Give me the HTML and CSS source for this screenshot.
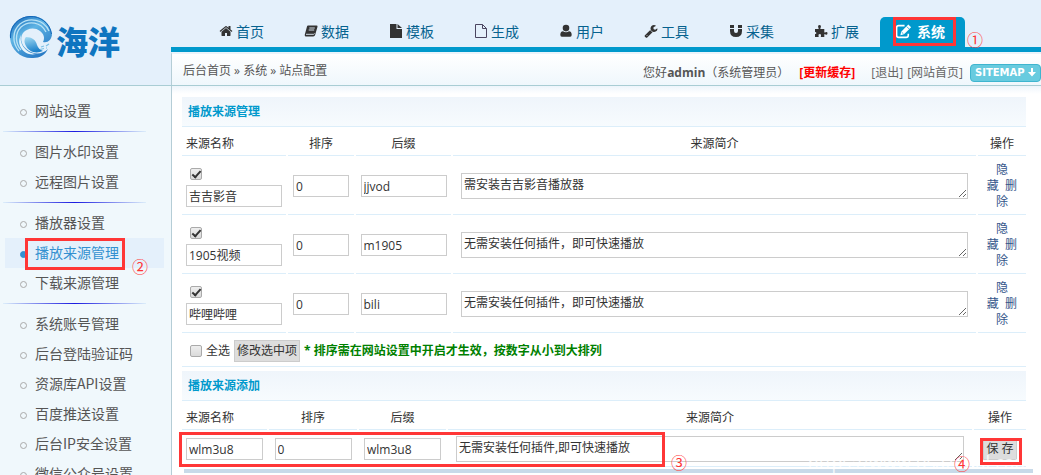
FILE: index.html
```html
<!DOCTYPE html>
<html lang="zh-CN">
<head>
<meta charset="utf-8">
<title>海洋 - 播放来源管理</title>
<link rel="stylesheet" href="styles.css">
</head>
<body>
<header class="top">
  <div class="logo">
    <svg class="logo-mark" viewBox="0 0 44 44" aria-hidden="true">
      <defs>
        <linearGradient id="ring" x1="0" y1="0" x2="0.6" y2="1">
          <stop offset="0" stop-color="#0b5fb4"/><stop offset="0.45" stop-color="#5fb4e4"/><stop offset="1" stop-color="#2a7cc6"/>
        </linearGradient>
        <linearGradient id="drop" x1="0" y1="0" x2="0.3" y2="1">
          <stop offset="0" stop-color="#a5dcf3"/><stop offset="1" stop-color="#1d82cb"/>
        </linearGradient>
      </defs>
      <path fill="url(#ring)" d="M43 20C42 8 32 0 21 1 9 2 0 11 1 23c1 12 11 21 23 20 7 0 12-3 15-9-5 5-13 6-19 2-7-4-10-12-6-18 4-5 12-6 17-2 4 3 5 7 3 11 5 1 8-2 9-7z"/>
      <path fill="none" stroke="#b9e2f5" stroke-width="1.300" d="M40 16C35 4 20 2 11 9 3 16 3 28 10 36M37 17C32 7 20 5 12 12 6 18 6 28 12 35"/>
      <path fill="none" stroke="#1466b8" d="M42.500 19C41 8 31 1 21 1.500 9 2 1 11 1.500 23"/>
      <path fill="#e9f5fc" d="M12 20c-2 9 5 18 15 19-11 3-21-9-15-19z"/>
      <path fill="url(#drop)" d="M17 22c6 0 10 3 11 8 1 3 3 5 6 6-7 3-14 1-17-5-2-3-2-7 0-9z"/>
      <path fill="none" stroke="#7cc0e6" stroke-width="1.200" d="M32 32l3-1M37 31l3-2M31 34.500l4-1M37 33h1"/>
    </svg>
    <span class="logo-text">海洋</span>
  </div>
  <div class="top-main">
    <nav class="nav">
      <a href="#"><svg class="icon" viewBox="0 0 1792 1792"><path d="M1472 992v480q0 26-19 45t-45 19h-384v-384h-256v384h-384q-26 0-45-19t-19-45v-480q0-1 .5-3t.5-3l575-474 575 474q1 2 1 6zm223-69l-62 74q-8 9-21 11h-3q-13 0-21-7l-692-577-692 577q-12 8-24 7-13-2-21-11l-62-74q-8-10-7-23.500t11-21.500l719-599q32-26 76-26t76 26l244 204v-195q0-14 9-23t23-9h192q14 0 23 9t9 23v408l219 182q10 8 11 21.500t-7 23.500z"/></svg>首页</a>
      <a href="#"><svg class="icon" viewBox="0 0 14 14"><path d="M4 1.500h8.500q1.300 0 1 1.300l-2.300 8q-.4 1.700-2 1.700H2Q.7 12.500.7 11L3 2.500q.2-1 1-1z"/><path fill="none" stroke="#e4f0fa" stroke-width=".9" d="M5.300 4h5.500M4.700 6h5.500M2 10.300h7.500q.8 0 1-.8"/></svg>数据</a>
      <a href="#"><svg class="icon" viewBox="0 0 14 14"><path d="M1 0h6.500v5H13v9H1zM8.500 0L13 4H8.500z"/></svg>模板</a>
      <a href="#"><svg class="icon" viewBox="0 0 14 14"><path fill="none" stroke="#4a4560" d="M1.500.5h7l4 4v9h-11zM8.500.5v4h4"/></svg>生成</a>
      <a href="#"><svg class="icon" viewBox="0 0 14 14"><path d="M7 .8a3.200 3.200 0 0 1 0 6.600A3.200 3.200 0 0 1 7 .8zM4 7.200q3 2 6 0 2.700.4 2.700 3.600 0 2-1.500 2H2.800q-1.500 0-1.500-2Q1.300 7.600 4 7.200z"/></svg>用户</a>
      <a href="#"><svg class="icon" viewBox="0 0 1792 1792"><path d="M448 1472q0-26-19-45t-45-19-45 19-19 45 19 45 45 19 45-19 19-45zm644-420l-682 682q-37 37-90 37-52 0-91-37l-106-108q-38-36-38-90 0-53 38-91l681-681q39 98 114.500 173.500t173.500 114.500zm634-435q0 39-23 106-47 134-164.500 217.500t-258.500 83.500q-185 0-316.500-131.500t-131.500-316.500 131.500-316.500 316.500-131.500q58 0 121.500 16.500t107.500 46.500q16 11 16 28t-16 28l-293 169v224l193 107q5-3 79-48.500t135.500-81 70.500-35.500q15 0 23.500 10t8.500 25z"/></svg>工具</a>
      <a href="#"><svg class="icon" viewBox="0 0 14 14"><path d="M1 1h4v3H1zM9 1h4v3H9zM1 5h4v2q0 2 2 2t2-2V5h4v2q0 6-6 6T1 7z"/></svg>采集</a>
      <a href="#"><svg class="icon" viewBox="0 0 14 14"><path d="M1 5h3.500q.5-.5-.2-1.500Q3.500 1 5.500 1t1.200 2.500Q6 4.500 6.500 5h3.800v3.200q.5.500 1.200 0 2-.8 2 1.100t-2 1.100q-.7-.6-1.200 0V13H7q-.5-.4 0-1.200.4-1.700-1.200-1.800-1.700.1-1.300 1.800.4.800 0 1.200H1v-3q1.200.2 1.400-1Q2.200 7.900 1 8z"/></svg>扩展</a>
      <a href="#" class="active"><svg class="icon icon-edit" viewBox="0 0 16 14"><path fill="none" stroke="#fff" stroke-width="1.500" d="M9 1.500H3.500q-2 0-2 2v7q0 2 2 2h7q2 0 2-2V9"/><path fill="#fff" d="M12.500.5l2.700 2.600-6.700 6.600-3.400.8.700-3.300z"/><path stroke="#0099cc" stroke-width=".7" d="M11 2.300l2.500 2.500M6.200 7.500l1.800 1.800"/></svg>系统</a>
    </nav>
    <div class="crumb-bar">
      <div class="crumbs">后台首页 » 系统 » 站点配置</div>
      <div class="user">
        <span class="hello">您好<b>admin</b>（系统管理员）</span>
        <a href="#" class="refresh">[更新缓存]</a>
        <a href="#">[退出]</a>
        <a href="#">[网站首页]</a>
        <button type="button" class="sitemap">SITEMAP<svg viewBox="0 0 8 9" aria-hidden="true"><path d="M3 0h2v4h3L4 8.500 0 4h3z"/></svg></button>
      </div>
    </div>
  </div>
</header>
<div class="page">
  <aside class="side">
    <ul>
      <li><a href="#">网站设置</a></li>
    </ul>
    <ul>
      <li><a href="#">图片水印设置</a></li>
      <li><a href="#">远程图片设置</a></li>
    </ul>
    <ul>
      <li><a href="#">播放器设置</a></li>
      <li class="current"><a href="#">播放来源管理</a></li>
      <li><a href="#">下载来源管理</a></li>
    </ul>
    <ul>
      <li><a href="#">系统账号管理</a></li>
      <li><a href="#">后台登陆验证码</a></li>
      <li><a href="#">资源库API设置</a></li>
      <li><a href="#">百度推送设置</a></li>
      <li><a href="#">后台IP安全设置</a></li>
      <li><a href="#">微信公众号设置</a></li>
    </ul>
  </aside>
  <main class="main">
    <form class="panel">
      <table class="grid">
        <colgroup><col class="c-name"><col class="c-order"><col class="c-suffix"><col><col class="c-act"></colgroup>
        <tr class="title"><th colspan="5">播放来源管理</th></tr>
        <tr class="heads"><th class="left">来源名称</th><th>排序</th><th>后缀</th><th>来源简介</th><th>操作</th></tr>
        <tr class="item">
          <td class="left"><input type="checkbox" checked aria-label="选择吉吉影音"><input type="text" class="w-name" value="吉吉影音" aria-label="来源名称"></td>
          <td><input type="text" class="w-order" value="0" aria-label="排序"></td>
          <td><input type="text" class="w-suffix" value="jjvod" aria-label="后缀"></td>
          <td><textarea aria-label="来源简介">需安装吉吉影音播放器</textarea></td>
          <td class="acts"><a href="#">隐<br>藏</a>&nbsp; <a href="#">删<br>除</a></td>
        </tr>
        <tr class="item">
          <td class="left"><input type="checkbox" checked aria-label="选择1905视频"><input type="text" class="w-name" value="1905视频" aria-label="来源名称"></td>
          <td><input type="text" class="w-order" value="0" aria-label="排序"></td>
          <td><input type="text" class="w-suffix" value="m1905" aria-label="后缀"></td>
          <td><textarea aria-label="来源简介">无需安装任何插件，即可快速播放</textarea></td>
          <td class="acts"><a href="#">隐<br>藏</a>&nbsp; <a href="#">删<br>除</a></td>
        </tr>
        <tr class="item">
          <td class="left"><input type="checkbox" checked aria-label="选择哔哩哔哩"><input type="text" class="w-name" value="哔哩哔哩" aria-label="来源名称"></td>
          <td><input type="text" class="w-order" value="0" aria-label="排序"></td>
          <td><input type="text" class="w-suffix" value="bili" aria-label="后缀"></td>
          <td><textarea aria-label="来源简介">无需安装任何插件，即可快速播放</textarea></td>
          <td class="acts"><a href="#">隐<br>藏</a>&nbsp; <a href="#">删<br>除</a></td>
        </tr>
        <tr class="batch">
          <td colspan="5"><div class="batch-row"><label><input type="checkbox">全选</label><button type="button" class="btn">修改选中项</button><strong>* 排序需在网站设置中开启才生效，按数字从小到大排列</strong></div></td>
        </tr>
      </table>
    </form>
    <form class="panel">
      <table class="grid">
        <colgroup><col class="a-name"><col class="a-order"><col class="a-suffix"><col><col class="a-act"></colgroup>
        <tr class="title"><th colspan="5">播放来源添加</th></tr>
        <tr class="heads"><th class="left">来源名称</th><th>排序</th><th>后缀</th><th>来源简介</th><th>操作</th></tr>
        <tr class="add">
          <td class="left"><input type="text" class="w-add" value="wlm3u8" aria-label="来源名称"></td>
          <td><input type="text" class="w-add" value="0" aria-label="排序"></td>
          <td><input type="text" class="w-add" value="wlm3u8" aria-label="后缀"></td>
          <td><textarea aria-label="来源简介">无需安装任何插件,即可快速播放</textarea></td>
          <td><button type="button" class="btn">保 存</button></td>
        </tr>
      </table>
      <div class="end-bar"></div>
    </form>
  </main>
</div>
<div class="watermark">https://www.usazonal.com</div>
<div class="mark mark-1"></div><span class="num num-1">①</span>
<div class="mark mark-2"></div><span class="num num-2">②</span>
<div class="mark mark-3"></div><span class="num num-3">③</span>
<div class="mark mark-4"></div><span class="num num-4">④</span>
</body>
</html>
```
FILE: styles.css
```css
*, *::before, *::after { box-sizing: border-box; }
body {
  margin: 0;
  height: 100vh;
  overflow: hidden;
  position: relative;
  display: flex;
  flex-direction: column;
  background: #fff;
  color: #333;
  font: 12px/16px "Open Sans", "Noto Sans CJK SC", sans-serif;
}
a { color: inherit; text-decoration: none; }

/* header */
.top {
  flex: none;
  display: grid;
  grid-template-columns: 171px 1fr;
  height: 86px;
  background: #e4f0fb;
  border-bottom: 1px solid #a9cdd4;
}
.logo { display: flex; align-items: flex-start; padding: 15px 0 0 9px; gap: 3px; }
.logo-mark { width: 44px; height: 44px; flex: none; }
.logo-text {
  padding-top: 5px;
  font: 900 32px/40px "Noto Sans CJK SC", sans-serif;
  color: #0f75c0;
  white-space: nowrap;
}
.top-main { display: flex; flex-direction: column; min-width: 0; }
.nav {
  display: flex;
  height: 52px;
  padding: 17px 0 0 29px;
  border-bottom: 5px solid #0099cc;
}
.nav a {
  flex: none;
  width: 85px;
  display: flex;
  align-items: center;
  gap: 3px;
  padding: 0 0 2px 19px;
  font: 14px/28px "Noto Sans CJK SC", sans-serif;
  color: #06628f;
}
.icon { width: 14px; height: 14px; fill: #333; flex: none; }
.nav .active {
  background: #0099cc;
  color: #fff;
  font-weight: bold;
  border-radius: 5px 5px 0 0;
  padding-left: 15px;
  gap: 5px;
}
.icon-edit { width: 17px; height: 15px; }
.crumb-bar {
  flex: 1;
  display: flex;
  justify-content: space-between;
  border-left: 1px solid #b5cdd6;
  border-top: 2px solid #eaf4fb;
  padding-left: 11px;
  background: linear-gradient(#fff, #eff7fc);
  color: #555;
  white-space: nowrap;
}
.crumbs { padding-top: 9px; }
.user { display: flex; align-items: center; padding-top: 6px; }
.user a { margin-right: 4px; color: #666; }
.user .refresh { margin: 0 16px 0 10px; color: #f00; font-weight: bold; }
.sitemap {
  display: flex;
  align-items: center;
  gap: 3px;
  width: 71px;
  height: 18px;
  margin-left: 3px;
  padding: 0 0 0 4px;
  border: 1px solid #3fb5cf;
  border-radius: 4px;
  background: #68cbdf;
  color: #fff;
  font: bold 10px/14px "DejaVu Sans", sans-serif;
}
.sitemap svg { width: 8px; height: 9px; fill: #fff; flex: none; }

/* layout */
.page { flex: 1; min-height: 0; display: grid; grid-template-columns: 172px 1fr; }

/* sidebar */
.side { background: #f0f8fc; border-right: 1px solid #b5cdd6; padding-top: 10px; overflow: hidden; }
.side ul { list-style: none; margin: 0; padding: 0 7px 0 5px; }
.side ul + ul { padding-top: 11px; background: linear-gradient(90deg, #dceefa, #1a1ae0 50%, #dceefa) 3px 5px / 143px 1px no-repeat; }
.side li {
  display: flex;
  align-items: center;
  height: 30px;
  padding: 0 0 2px 15px;
  font: 14px/20px "Noto Sans CJK SC", sans-serif;
  color: #555;
}
.side li::before {
  content: "";
  width: 7px;
  height: 7px;
  margin: 4px 8px 0 0;
  border: 1px solid #aaa;
  border-radius: 50%;
}
.side .current { background: #e4f0fb; color: #3390d0; }
.side .current::before { background: #3390d0; border-color: #3390d0; }

/* tables */
.main { min-width: 0; padding: 9px 13px 0 8px; background: linear-gradient(#eef5fb, #fff 8px); }
.panel { margin: 0; }
.grid { width: 100%; table-layout: fixed; border-spacing: 2px; border-collapse: separate; }
.grid th, .grid td { padding: 0; border-bottom: 1px solid #dceefa; text-align: center; vertical-align: middle; font-weight: normal; }
.grid .left { text-align: left; padding-left: 4px; }
.grid .title th {
  height: 30px;
  padding-left: 6px;
  text-align: left;
  font-weight: bold;
  color: #0099cc;
  background: linear-gradient(#eff5fb, #f7fbfe);
}
.heads th { height: 27px; padding-top: 4px; }
.item td { height: 57px; }
.batch td { height: 32px; }
.add td { height: 35px; }
.c-name { width: 104px; } .c-order { width: 66px; } .c-suffix { width: 95px; } .c-act { width: 48px; }
.a-name { width: 85px; } .a-order { width: 88px; } .a-suffix { width: 87px; } .a-act { width: 52px; }

input[type="text"], textarea {
  display: block;
  margin: 0 auto;
  border: 1px solid #ccc;
  border-radius: 0;
  background: #fff;
  color: #333;
  font: inherit;
}
input[type="text"] { height: 22px; padding: 0 2px; }
textarea { width: calc(100% - 16px); height: 26px; padding: 3px 2px; overflow: hidden; resize: both; }
.left input[type="text"] { margin-left: 0; }
.w-name { width: 96px; } .w-order { width: 56px; } .w-suffix { width: 86px; } .w-add { width: 77px; }
input[type="checkbox"] {
  appearance: none;
  width: 12px;
  height: 12px;
  margin: 0;
  border: 1px solid #aaa;
  border-radius: 2px;
  background: linear-gradient(#eee, #dadada);
}
input[type="checkbox"]:checked::after {
  content: "";
  display: block;
  width: 5px;
  height: 9px;
  margin: 0 auto;
  border: solid #333;
  border-width: 0 2px 2px 0;
  transform: rotate(42deg);
}
.item input[type="checkbox"] { display: block; margin: 2px 0 5px 4px; }
.acts { line-height: 16px; color: #35568a; }
.batch-row { display: flex; align-items: center; gap: 4px; padding-left: 8px; color: #333; }
.batch-row label { display: flex; align-items: center; gap: 4px; }
.batch-row strong { color: #008000; }
.btn { height: 22px; padding: 0 2px; border: 1px solid #ccc; background: #ddd; color: #333; font: inherit; }
.end-bar { height: 4px; margin: 0 -5px 0 4px; background: #c8dae9; }

/* annotations over the page */
.watermark { position: absolute; right: 10px; bottom: 2px; color: #fff; opacity: 0.8; font: 18px/22px "Open Sans", sans-serif; pointer-events: none; }
.mark { position: absolute; border: 3px solid #ff3636; pointer-events: none; }
.mark-1 { left: 893px; top: 17px; width: 63px; height: 29px; }
.mark-2 { left: 25px; top: 238px; width: 100px; height: 32px; }
.mark-3 { left: 179px; top: 432px; width: 486px; height: 35px; }
.mark-4 { left: 980px; top: 438px; width: 42px; height: 27px; }
.num { position: absolute; color: #ff3636; font: 16px/18px "Noto Sans CJK SC", sans-serif; }
.num-1 { left: 967px; top: 30px; }
.num-2 { left: 132px; top: 257px; }
.num-3 { left: 671px; top: 453px; }
.num-4 { left: 954px; top: 454px; }
```
